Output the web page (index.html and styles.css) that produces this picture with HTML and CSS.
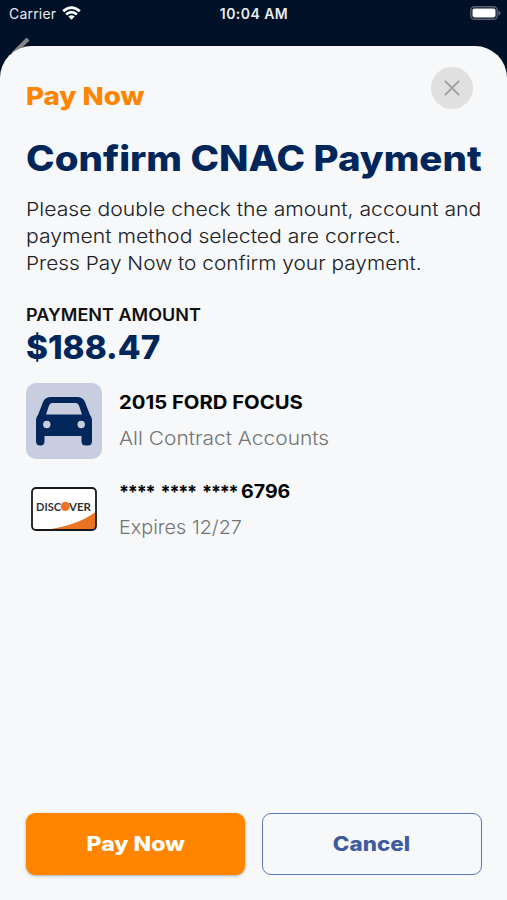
FILE: index.html
```html
<!DOCTYPE html>
<html lang="en">
<head>
<meta charset="utf-8">
<title>Confirm Payment</title>
<link rel="stylesheet" href="styles.css">
</head>
<body>
<div class="status">
  <div class="carrier"><span>Carrier</span>
    <svg width="19" height="14" viewBox="0 0 19 14" fill="none" stroke="#fff" stroke-width="2.7"><path d="M1.200 5.300Q9.500-2.200 17.800 5.300M4.100 8.500q5.400-4.700 10.800 0"/><path d="M9.500 13.800 6.400 10.600q3.100-2.500 6.200 0z" fill="#fff" stroke="none"/></svg>
  </div>
  <div class="time">10:04 AM</div>
  <svg class="battery" width="31" height="14" viewBox="0 0 31 14"><rect x=".8" y=".7" width="26.4" height="12.6" rx="3.6" fill="none" stroke="#596170" stroke-width="1.4"/><rect x="2.5" y="2.4" width="23" height="9.2" rx="2" fill="#fff"/><path d="M28.400 4.500q2.200.8 2.200 2.500t-2.200 2.500z" fill="#596170"/></svg>
</div>
<svg class="back" width="30" height="30" viewBox="0 0 30 30"><path d="M23 2 8 17" stroke="#858585" stroke-width="4"/></svg>
<main class="sheet">
  <header class="top">
    <h2 class="label"><span class="t">Pay Now</span></h2>
    <button class="close" aria-label="Close"><svg width="42" height="42" viewBox="0 0 42 42"><path d="m14.500 14.500 13 13m0-13-13 13" stroke="#a3a3a4" stroke-width="2" stroke-linecap="round"/></svg></button>
  </header>
  <h1 class="title"><span class="t">Confirm CNAC Payment</span></h1>
  <p class="copy"><span class="t c1">Please double check the amount, account and</span><br><span class="t c2">payment method selected are correct.</span><br><span class="t c3">Press Pay Now to confirm your payment.</span></p>
  <div class="caption"><span class="t">PAYMENT AMOUNT</span></div>
  <div class="amount"><span class="t">$188.47</span></div>
  <section class="row">
    <div class="tile"><svg width="56" height="50" viewBox="0 0 56 50"><path fill="#00265a" fill-rule="evenodd" d="M15 1h26q6 0 8 5l5 13q2 2 2 5v21q0 4.500-4 4.500h-2.500q-4 0-4-4.500V40h-37v5q0 4.500-4 4.500H4q-4 0-4-4.500V24q0-3 2-5L7 6q2-5 8-5Zm1 6q-2 0-3 2.500L10 18.500h36l-3-9q-1-2.500-3-2.500Z"/><circle cx="10.800" cy="28.500" r="3.700" fill="#c8cee0"/><circle cx="45.200" cy="28.500" r="3.700" fill="#c8cee0"/></svg></div>
    <div class="info"><div class="name"><span class="t n1">2015 FORD FOCUS</span></div><div class="sub"><span class="t s1">All Contract Accounts</span></div></div>
  </section>
  <section class="row card">
    <div class="logo"><svg width="66" height="44" viewBox="0 0 66 44"><rect x="1" y="1" width="64" height="42" rx="4" fill="#fff"/><path d="M17 42.500Q47 38 64.500 25v14q0 3.500-3.500 3.500Z" fill="#e97523"/><rect x="1" y="1" width="64" height="42" rx="4" fill="none" stroke="#191919" stroke-width="1.800"/><text x="5" y="24" textLength="25" lengthAdjust="spacingAndGlyphs" class="brand">DISC</text><circle cx="34.300" cy="19.400" r="4.600" fill="#ed7524"/><text x="38" y="24" textLength="22" lengthAdjust="spacingAndGlyphs" class="brand">VER</text></svg></div>
    <div class="info"><div class="name"><span class="mask">**** **** ****</span><span class="t n3">6796</span></div><div class="sub"><span class="t s2">Expires 12/27</span></div></div>
  </section>
  <footer class="actions">
    <button class="btn pay"><span class="t">Pay Now</span></button>
    <button class="btn cancel"><span class="t">Cancel</span></button>
  </footer>
</main>
</body>
</html>
```
FILE: styles.css
```css
* { box-sizing: border-box; }
body { margin: 0; width: 507px; height: 900px; overflow: hidden; background: #001127; font-family: Inter, "Liberation Sans", sans-serif; display: flex; flex-direction: column; position: relative; }
h1, h2, p { margin: 0; }
button { font-family: inherit; padding: 0; border: 0; }
svg { display: block; }
.t { display: inline-block; white-space: pre; transform-origin: left center; }
.status { height: 46px; flex: none; display: grid; grid-template-columns: 1fr auto 1fr; align-items: start; padding: 6px 6px 0 9px; color: #e9ecf0; font-size: 14px; line-height: 16px; }
.carrier { display: flex; gap: 6px; letter-spacing: .2px; }
.time { font-weight: 600; letter-spacing: .45px; margin-right: 2px; }
.battery { justify-self: end; }
.back { position: absolute; left: 5px; top: 37px; }
.sheet { position: relative; flex: 1; background: #f6f8fa; border-radius: 32px 32px 0 0; padding: 21px 25.5px 25px 26px; display: flex; flex-direction: column; }
.top { display: flex; justify-content: space-between; height: 42px; padding-right: 8.5px; }
.label { font-size: 25px; line-height: 30px; font-weight: 800; color: #ff8400; padding-top: 14px; }
.label .t { transform: scaleX(1.108); }
.close { width: 42px; height: 42px; border-radius: 50%; background: #e0e0e0; }
.title { margin-top: 28px; font-size: 35px; line-height: 42px; font-weight: 800; color: #00265a; height: 42px; }
.title .t { transform: scaleX(1.1); }
.copy { margin-top: 16.5px; font-size: 19px; line-height: 27px; height: 81px; font-weight: 300; color: #202124; }
.c1 { transform: scaleX(1.114); }
.c2 { transform: scaleX(1.115); }
.c3 { transform: scaleX(1.097); }
.caption { margin-top: 28.5px; font-size: 17px; line-height: 20px; font-weight: 600; color: #111; }
.caption .t { transform: scaleX(1.06); }
.amount { margin-top: 2px; font-size: 33px; line-height: 40px; font-weight: 800; color: #00265a; }
.amount .t { transform: scaleX(1.007); }
.row { margin-top: 16px; display: flex; gap: 17px; height: 76px; flex: none; }
.tile { width: 76px; height: 76px; border-radius: 10px; background: #c8cee0; display: grid; place-items: center; }
.info { padding-top: 8px; }
.name { font-size: 19px; line-height: 24px; font-weight: 700; color: #050505; white-space: nowrap; }
.n1 { transform: scaleX(1.067); }
.mask { display: inline-block; width: 122px; font-size: 18px; letter-spacing: -1.2px; word-spacing: 3px; white-space: pre; }
.n3 { transform: scaleX(1.03); }
.sub { margin-top: 12px; font-size: 19px; line-height: 24px; font-weight: 300; color: #747476; }
.s1 { transform: scaleX(1.102); }
.s2 { transform: scaleX(1.042); }
.card { margin-top: 12.5px; }
.logo { width: 76px; display: flex; justify-content: center; padding-top: 15.5px; }
.brand { font: 700 12px Lato, sans-serif; fill: #333; }
.actions { margin-top: auto; display: grid; grid-template-columns: 1fr 1fr; gap: 17px; }
.btn { height: 62px; border-radius: 9px; font-size: 20px; font-weight: 800; }
.btn .t { transform-origin: center; transform: scaleX(1.12); }
.pay { background: #ff8400; color: #fff; box-shadow: 0 1px 3px rgba(0,0,0,.3); }
.pay .t { transform: scaleX(1.15); }
.cancel { background: transparent; border: 1px solid #6179b5; color: #3f5a9f; }
```
